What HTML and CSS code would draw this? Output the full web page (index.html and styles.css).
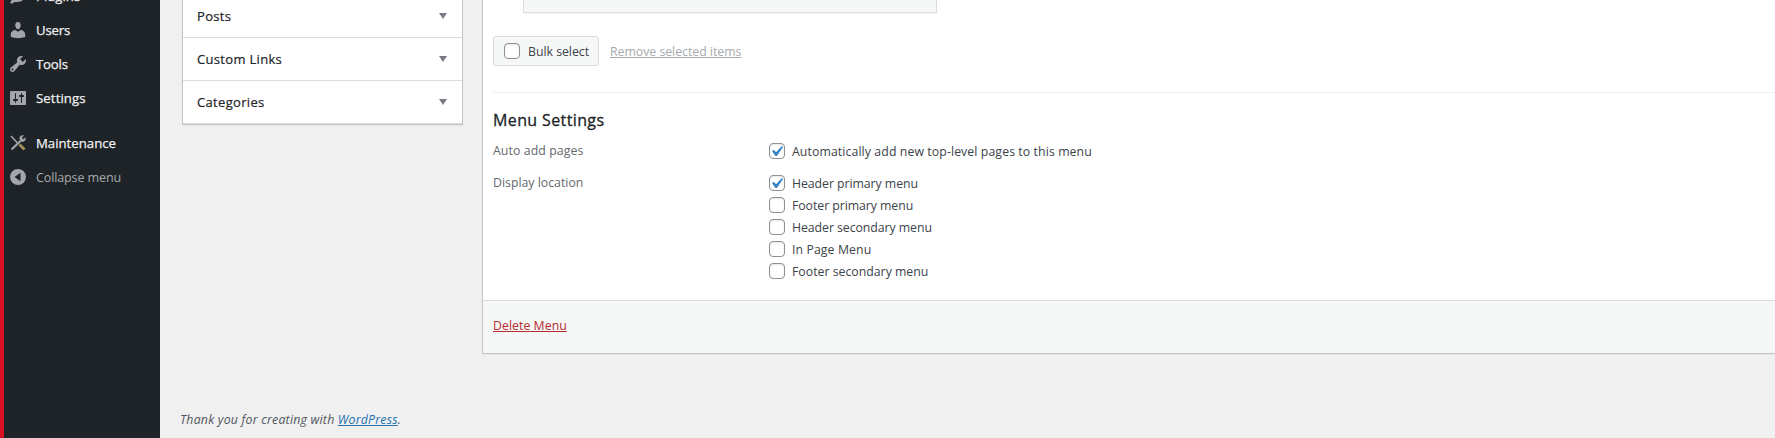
FILE: index.html
```html
<!DOCTYPE html>
<html lang="en">
<head>
<meta charset="utf-8">
<title>Menus</title>
<link rel="stylesheet" href="styles.css">
</head>
<body>
<div class="app">
  <nav class="sidebar">
    <a class="nav-item"><svg class="icon" viewBox="0 0 20 20"><path d="M13.110 4.360L9.870 7.600 8 5.730l3.240-3.240c.350-.340 1.050-.200 1.560.320.520.510.660 1.210.310 1.550zm-8 1.770l.910-1.120 9.010 9.010-1.190.840c-.710.710-2.630 1.160-3.820 1.160H6.140L4.900 17.260c-.590.590-1.540.590-2.120 0-.590-.580-.590-1.530 0-2.120l1.240-1.240v-3.880c0-1.130.400-3.190 1.090-3.890zm7.260 3.970l3.240-3.240c.340-.350 1.040-.210 1.550.310.520.510.660 1.210.310 1.550l-3.240 3.250z"/></svg><span>Plugins</span></a>
    <a class="nav-item"><svg class="icon" viewBox="0 0 20 20"><path d="M10 9.250c-2.270 0-2.730-3.440-2.730-3.440C7 4.020 7.820 2 9.970 2c2.160 0 2.980 2.020 2.710 3.810 0 0-.41 3.440-2.680 3.440zm0 2.570L12.720 10c2.390 0 4.520 2.330 4.520 4.530v2.490s-3.650 1.130-7.240 1.130c-3.650 0-7.240-1.130-7.240-1.130v-2.490c0-2.250 1.940-4.480 4.470-4.480z"/></svg><span class="t-users">Users</span></a>
    <a class="nav-item"><svg class="icon" viewBox="0 0 20 20"><path d="M16.680 9.770c-1.340 1.340-3.300 1.670-4.950.99l-5.410 6.520c-.99.99-2.590.99-3.580 0s-.99-2.590 0-3.570l6.520-5.420c-.68-1.650-.35-3.610.99-4.950 1.280-1.280 3.120-1.620 4.720-1.060l-2.890 2.890 2.820 2.820 2.860-2.870c.53 1.580.18 3.390-1.080 4.650zM3.810 16.210c.4.390 1.040.39 1.430 0 .4-.4.400-1.040 0-1.430-.39-.4-1.030-.4-1.430 0-.39.390-.39 1.030 0 1.430z"/></svg><span class="t-users">Tools</span></a>
    <a class="nav-item"><svg class="icon" viewBox="0 0 20 20"><path fill-rule="evenodd" d="M18 16V4c0-.550-.450-1-1-1H3c-.550 0-1 .450-1 1v12c0 .550.450 1 1 1h14c.550 0 1-.450 1-1zM8 11h1c.550 0 1 .450 1 1s-.450 1-1 1H8v1.500c0 .280-.220.500-.500.500s-.500-.220-.500-.500V13H6c-.550 0-1-.450-1-1s.450-1 1-1h1V5.500c0-.280.220-.500.500-.500s.500.220.500.500V11zm5-2h-1c-.550 0-1-.450-1-1s.450-1 1-1h1V5.500c0-.280.220-.500.500-.500s.500.220.500.500V7h1c.550 0 1 .450 1 1s-.450 1-1 1h-1v5.500c0 .280-.220.500-.500.500s-.500-.220-.500-.500V9z"/></svg><span class="t-settings">Settings</span></a>
    <a class="nav-item separated"><svg class="icon" viewBox="0 0 20 20"><path class="blade" d="M3 3l7 7.500"/><path class="handle" d="M11.500 11.500l5 5"/><path class="wrench" d="M3.500 16.500 13 7.500"/><path d="M17.800 4.200 15.500 6.300 13.800 4.700 16 2.500c-2.500-.7-4.700 1-4.600 3.300L13.700 8.700c2.400.4 4.600-1.800 4.100-4.500z"/></svg><span>Maintenance</span></a>
    <a class="nav-item collapse"><svg class="icon" viewBox="0 0 20 20"><path fill-rule="evenodd" d="M10 2a8 8 0 1 0 0 16 8 8 0 0 0 0-16zm2.500 3.800v8.400L6.600 10z"/></svg><span>Collapse menu</span></a>
  </nav>
  <main class="content">
    <div class="columns">
      <div class="accordion">
        <div class="section"><span>Posts</span><i class="arrow"></i></div>
        <div class="section"><span>Custom Links</span><i class="arrow"></i></div>
        <div class="section"><span>Categories</span><i class="arrow"></i></div>
      </div>
      <div class="panel">
        <div class="panel-body">
          <div class="menu-item"></div>
          <div class="bulk">
            <label class="bulk-button"><span class="box"></span><span class="bulk-label">Bulk select</span></label>
            <a class="remove">Remove selected items</a>
          </div>
          <section class="settings">
            <h3>Menu Settings</h3>
            <div class="field">
              <div class="legend wide">Auto add pages</div>
              <div class="options">
                <label class="option"><span class="box"><svg class="check" viewBox="0 0 20 20"><path d="M14.830 4.890l1.340.94-5.810 8.380H9.020L5.780 9.670l1.340-1.250 2.570 2.400z"/></svg></span><span class="wide">Automatically add new top-level pages to this menu</span></label>
              </div>
            </div>
            <div class="field">
              <div class="legend">Display location</div>
              <div class="options">
                <label class="option"><span class="box"><svg class="check" viewBox="0 0 20 20"><path d="M14.830 4.890l1.340.94-5.810 8.380H9.020L5.780 9.670l1.340-1.250 2.570 2.400z"/></svg></span><span class="tight">Header primary menu</span></label>
                <label class="option"><span class="box"></span><span class="tight">Footer primary menu</span></label>
                <label class="option"><span class="box"></span><span class="tight">Header secondary menu</span></label>
                <label class="option"><span class="box"></span><span class="wide">In Page Menu</span></label>
                <label class="option"><span class="box"></span><span>Footer secondary menu</span></label>
              </div>
            </div>
          </section>
        </div>
        <div class="panel-footer"><a class="delete">Delete Menu</a></div>
      </div>
    </div>
    <footer class="thanks">Thank you for creating with <a>WordPress</a>.</footer>
  </main>
</div>
</body>
</html>
```
FILE: styles.css
```css
* { box-sizing: border-box; }
body {
  margin: 0;
  background: #f0f0f1;
  color: #3c434a;
  font: 12.3px/20px "Open Sans", "Noto Sans", sans-serif;
}
.app { display: flex; height: 438px; overflow: hidden; }
.sidebar {
  flex: none;
  width: 160px;
  border-left: 4px solid #d91023;
  background: #1d2327;
}
.nav-item {
  display: flex;
  align-items: center;
  gap: 8px;
  height: 34px;
  padding-left: 4px;
  color: #f0f0f1;
  font-size: 13.2px;
  -webkit-text-stroke: .25px;
}
.nav-item:first-child { margin-top: -21px; }
.separated { margin-top: 11px; }
.t-users { letter-spacing: -.2px; }
.t-settings { letter-spacing: .1px; }
.collapse { color: #a7aaad; font-size: 12.6px; letter-spacing: -.16px; -webkit-text-stroke: 0; }
.collapse span { padding-top: 1px; }
.icon { flex: none; width: 20px; height: 20px; fill: #a2a6ab; }
.icon .blade, .icon .handle, .icon .wrench { fill: none; stroke: #a2a6ab; stroke-width: 1.6; }
.icon .handle { stroke: #a98f5c; stroke-width: 2.8; }
.icon .wrench { stroke-width: 2.2; }

.content { flex: 1; min-width: 0; padding-left: 22px; background: #f0f0f0; }
.columns { display: flex; align-items: flex-start; gap: 19px; height: 354px; }
.accordion {
  flex: none;
  width: 281px;
  margin-top: -6px;
  border: 1px solid #c3c4c7;
  border-top: 0;
  background: #fff;
  box-shadow: 0 1px 1px rgba(0, 0, 0, .04);
}
.section {
  display: flex;
  align-items: center;
  justify-content: space-between;
  height: 43px;
  padding: 0 15px 0 14px;
  border-bottom: 1px solid #dcdcde;
  color: #1d2327;
  font-size: 13px;
  letter-spacing: .32px;
  -webkit-text-stroke: .2px;
}
.section:first-child { height: 44px; }
.arrow { border: 4px solid transparent; border-top: 6px solid #787c82; border-bottom: 0; }

.panel {
  flex: 1;
  border: 1px solid #c3c4c7;
  border-width: 0 0 1px 1px;
  background: #fff;
  box-shadow: 0 1px 1px rgba(0, 0, 0, .04);
}
.panel-body { height: 300px; padding-left: 10px; }
.menu-item {
  width: 414px;
  height: 13px;
  margin-left: 30px;
  border: 1px solid #dcdcde;
  border-top: 0;
  background: #f6f7f7;
  box-shadow: 0 1px 1px rgba(0, 0, 0, .04);
}
.bulk { display: flex; align-items: center; gap: 11px; margin-top: 23px; letter-spacing: -.02px; }
.bulk-button {
  display: flex;
  align-items: center;
  gap: 8px;
  width: 106px;
  height: 30px;
  padding-left: 10px;
  border: 1px solid #dcdcde;
  border-radius: 3px;
  background: #f6f7f7;
}
.bulk-label, .remove { padding-top: 2px; }
.box {
  display: flex;
  flex: none;
  width: 16px;
  height: 16px;
  border: 1px solid #8c8f94;
  border-radius: 4px;
  background: #fff;
  box-shadow: inset 0 1px 2px rgba(0, 0, 0, .1);
}
.check { flex: none; width: 21px; height: 21px; margin: -3px 0 0 -4px; fill: #3582c4; }
.remove { color: #a7aaad; text-decoration: underline; }
.settings { margin-top: 26px; border-top: 1px solid #eee; }
h3 {
  margin: 16px 0 12px;
  color: #1d2327;
  font-size: 16px;
  font-weight: 400;
  line-height: 22px;
  letter-spacing: .38px;
  -webkit-text-stroke: .3px;
}
.field { display: flex; align-items: flex-start; margin-bottom: 16px; }
.legend { width: 276px; height: 16px; padding-top: 1px; color: #646970; line-height: 16px; }
.wide { letter-spacing: .09px; }
.tight { letter-spacing: -.06px; }
.options { display: grid; gap: 6px; }
.option { display: flex; align-items: center; gap: 7px; height: 16px; }
.option > span:last-child { padding-top: 2px; }
.legend { margin-top: -1px; }
.panel-footer {
  display: flex;
  align-items: center;
  height: 53px;
  padding: 0 0 3px 10px;
  border-top: 1px solid #dcdcde;
  background: #f6f7f7;
}
.delete { color: #b32d2e; text-decoration: underline; letter-spacing: .04px; }
.thanks { margin: 56px 0 0 -2px; color: #50575e; font-style: italic; letter-spacing: .22px; }
.thanks a { color: #2271b1; text-decoration: underline; }
```
